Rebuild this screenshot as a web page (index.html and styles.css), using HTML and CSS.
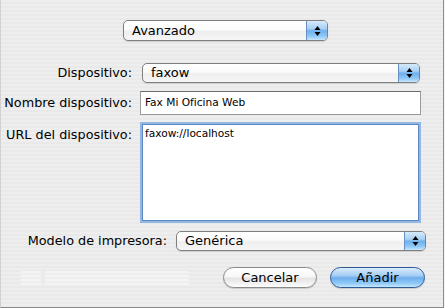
FILE: index.html
```html
<!DOCTYPE html>
<html lang="es">
<head>
<meta charset="utf-8">
<link rel="stylesheet" href="styles.css">
</head>
<body>
<div class="win">
  <div class="top">
    <div class="popup p-adv"><span class="ptext">Avanzado</span><span class="arr"><svg width="7" height="12" viewBox="0 0 7 12"><path d="M3.5 1 L6.5 5 H0.5 Z M3.5 11 L6.5 7 H0.5 Z" fill="#000"/></svg></span></div>
  </div>
  <div class="row r1">
    <div class="lbl l1">Dispositivo:</div>
    <div class="popup p-dev"><span class="ptext">faxow</span><span class="arr"><svg width="7" height="12" viewBox="0 0 7 12"><path d="M3.5 1 L6.5 5 H0.5 Z M3.5 11 L6.5 7 H0.5 Z" fill="#000"/></svg></span></div>
  </div>
  <div class="row r2">
    <div class="lbl l1">Nombre dispositivo:</div>
    <div class="field">Fax Mi Oficina Web</div>
  </div>
  <div class="row r3">
    <div class="lbl l1 lt">URL del dispositivo:</div>
    <div class="area">faxow://localhost</div>
  </div>
  <div class="row r4">
    <div class="lbl l4">Modelo de impresora:</div>
    <div class="popup p-mod"><span class="ptext">Genérica</span><span class="arr"><svg width="7" height="12" viewBox="0 0 7 12"><path d="M3.5 1 L6.5 5 H0.5 Z M3.5 11 L6.5 7 H0.5 Z" fill="#000"/></svg></span></div>
  </div>
  <div class="foot">
    <div class="prog"><span class="pknob"></span></div>
    <div class="btn">Cancelar</div>
    <div class="btn def">Añadir</div>
  </div>
</div>
</body>
</html>
```
FILE: styles.css
```css
html, body { margin: 0; padding: 0; background: #f4f4f4; }
body { width: 445px; height: 308px; overflow: hidden; font-family: "DejaVu Sans", "Liberation Sans", sans-serif; font-size: 12px; color: #000; }
.win {
  box-sizing: border-box;
  width: 444px; height: 308px;
  border-right: 1px solid #8c8c8c;
  border-bottom: 1px solid #8c8c8c;
  border-left: 1px solid #d0d0d0;
  background: repeating-linear-gradient(#eeeeee 0 2px, #e9e9e9 2px 4px);
  padding-top: 20px;
}
.top { padding-left: 122px; }
.popup {
  box-sizing: border-box;
  height: 21px;
  display: flex; align-items: stretch;
  border: 1px solid #7f7f7f;
  border-radius: 5px;
  background: linear-gradient(#ffffff 0%, #fbfbfb 45%, #eeeeee 55%, #f6f6f6 100%);
  box-shadow: 0 1px 1px rgba(0,0,0,0.12);
  overflow: hidden;
}
.ptext { flex: 1; padding-left: 8px; font-size: 13px; line-height: 19px; }
.arr {
  width: 20px; display: flex; align-items: center; justify-content: center;
  border-left: 1px solid #6a8fc2;
  background: linear-gradient(#d6eafb 0%, #a9d0f5 40%, #6eb0ee 52%, #8fc8f6 80%, #c8e6fc 100%);
}
.p-adv { width: 205px; }
.row { display: flex; align-items: flex-start; }
.lbl { text-align: right; font-size: 12.8px; }
.l1 { width: 131px; }
.r1 { margin-top: 22px; }
.r1 .lbl { line-height: 20px; }
.p-dev { width: 278px; margin-left: 10px; height: 20px; }
.p-dev .ptext { line-height: 18px; }
.r2 { margin-top: 8px; }
.r2 .lbl { line-height: 24px; }
.field {
  box-sizing: border-box; width: 281px; height: 24px; margin-left: 8px;
  background: #fff;
  border: 1px solid #9a9a9a; border-top-color: #6e6e6e;
  font-size: 10.6px; padding-left: 4px; line-height: 21px;
}
.r3 { margin-top: 7px; }
.lt { padding-top: 5px; }
.area {
  box-sizing: border-box; width: 277px; height: 97px; margin-left: 10px; margin-top: 2px;
  background: #fff;
  border: 1px solid #5e86c0;
  box-shadow: 0 0 0 2px #93b8e6;
  font-size: 10.6px; padding: 2px 0 0 2px;
}
.r4 { margin-top: 10px; }
.l4 { width: 166px; line-height: 20px; }
.p-mod { width: 250px; margin-left: 9px; height: 20px; }
.p-mod .ptext { line-height: 18px; }
.foot { display: flex; align-items: center; margin-top: 16px; padding-left: 20px; }
.prog {
  position: relative;
  width: 168px; height: 14px; margin-right: 34px;
  background: repeating-linear-gradient(#f4f4f4 0 2px, #eeeeee 2px 4px);
}
.pknob { position: absolute; left: 20px; top: 0; width: 4px; height: 14px; background: #ebebeb; }
.btn {
  box-sizing: border-box; height: 21px; border-radius: 11px;
  display: flex; align-items: center; justify-content: center;
  font-size: 13px;
  border: 1px solid #8a8a8a;
  background: linear-gradient(#ffffff 0%, #f7f7f7 45%, #e4e4e4 55%, #f4f4f4 85%, #ffffff 100%);
  box-shadow: 0 1px 1px rgba(0,0,0,0.15);
  width: 94px;
}
.def {
  margin-left: 13px; width: 95px;
  border-color: #2f5a96;
  background: linear-gradient(#d9ecfc 0%, #a5cdf4 40%, #6daeed 52%, #8fc9f8 80%, #c6e8fd 100%);
}
```
